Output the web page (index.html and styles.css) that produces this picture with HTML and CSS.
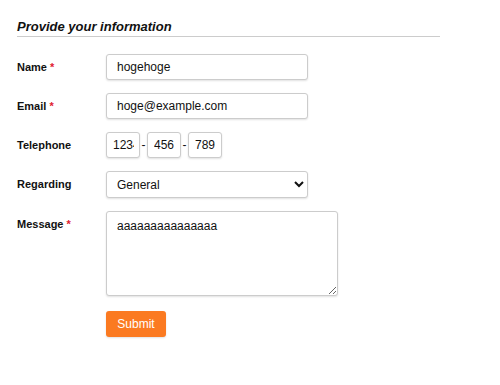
FILE: index.html
```html
<!DOCTYPE html>
<html lang="en">
<head>
  <meta charset="UTF-8" />
  <title>Contact form</title>
  <link rel="stylesheet" href="styles.css">
</head>
<body>
  <form class="contact-form">
    <fieldset>
      <legend>Provide your information</legend>

      <div class="form-row">
        <label for="name">Name <span class="req">*</span></label>
        <input type="text" id="name" class="field field-wide" value="hogehoge">
      </div>

      <div class="form-row">
        <label for="email">Email <span class="req">*</span></label>
        <input type="text" id="email" class="field field-wide" value="hoge@example.com">
      </div>

      <div class="form-row">
        <label for="tel1">Telephone</label>
        <div class="tel-group">
          <input type="text" id="tel1" class="field field-tel" value="1234">
          <span class="dash">-</span>
          <input type="text" class="field field-tel" value="456">
          <span class="dash">-</span>
          <input type="text" class="field field-tel" value="789">
        </div>
      </div>

      <div class="form-row">
        <label for="regarding">Regarding</label>
        <select id="regarding" class="field field-select">
          <option>General</option>
          <option>Support</option>
        </select>
      </div>

      <div class="form-row">
        <label for="message">Message <span class="req">*</span></label>
        <textarea id="message" class="field field-area">aaaaaaaaaaaaaaa</textarea>
      </div>

      <div class="form-row">
        <span></span>
        <button type="submit" class="btn-submit">Submit</button>
      </div>
    </fieldset>
  </form>
</body>
</html>
```

FILE: styles.css
```css
body {
  font-family: "Liberation Sans", Arial, sans-serif;
  margin: 0;
  padding: 19px 17px;
  background: #fff;
  color: #111;
}

.contact-form {
  width: 423px;
}

fieldset {
  border: none;
  margin: 0;
  padding: 0;
}

legend {
  width: 100%;
  padding: 0 0 2px 0;
  font-size: 13px;
  font-weight: bold;
  font-style: italic;
  border-bottom: 1px solid #ccc;
  margin-bottom: 17px;
}

.form-row {
  display: grid;
  grid-template-columns: 89px 1fr;
  align-items: start;
  margin-bottom: 13px;
}

.form-row label {
  font-size: 11px;
  font-weight: bold;
  padding-top: 7px;
}

.req {
  color: #e0202f;
}

.field {
  font-family: "Liberation Sans", Arial, sans-serif;
  font-size: 12px;
  color: #111;
  border: 1px solid #ccc;
  border-radius: 3px;
  box-shadow: 0 1px 2px rgba(0,0,0,0.12);
  box-sizing: border-box;
  background: #fff;
  margin: 0;
}

.field-wide {
  width: 202px;
  height: 26px;
  padding: 0 10px;
}

.tel-group {
  display: flex;
  align-items: center;
}

.field-tel {
  width: 34px;
  height: 26px;
  padding: 0 5px 0 6px;
}

.dash {
  font-size: 12px;
  width: 7px;
  text-align: center;
}

.field-select {
  width: 202px;
  height: 27px;
  padding: 0 6px;
}

.field-area {
  width: 232px;
  height: 85px;
  padding: 7px 10px;
  resize: both;
}

.btn-submit {
  background: #fb7a21;
  color: #fff;
  border: none;
  border-radius: 3px;
  font-family: "Liberation Sans", Arial, sans-serif;
  font-size: 12px;
  width: 60px;
  height: 26px;
  margin-top: 2px;
  box-shadow: 0 1px 2px rgba(0,0,0,0.12);
}
```
